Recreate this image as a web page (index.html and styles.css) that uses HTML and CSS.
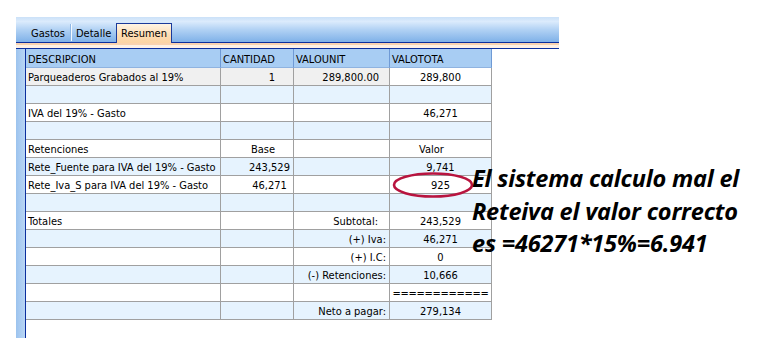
FILE: index.html
```html
<!DOCTYPE html>
<html lang="es">
<head>
    <meta charset="UTF-8">
    <title>Resumen</title>
    <link rel="stylesheet" href="styles.css">
</head>
<body>
    <div class="panel">
        <div class="tabbar">
            <span class="tab first">Gastos</span>
            <span class="sep"></span>
            <span class="tab">Detalle</span>
            <span class="tab active">Resumen</span>
        </div>
        <div class="band"></div>
        <div class="content">
            <div class="strip"></div>
            <div class="grid">
                <div class="row head">
                    <div class="cell">DESCRIPCION</div>
                    <div class="cell">CANTIDAD</div>
                    <div class="cell">VALOUNIT</div>
                    <div class="cell">VALOTOTA</div>
                </div>
                <div class="row">
                    <div class="cell ro">Parqueaderos Grabados al 19%</div>
                    <div class="cell ro right qty">1</div>
                    <div class="cell ro right unit">289,800.00</div>
                    <div class="cell center">289,800</div>
                </div>
                <div class="row alt">
                    <div class="cell"></div><div class="cell"></div><div class="cell"></div><div class="cell"></div>
                </div>
                <div class="row">
                    <div class="cell">IVA del 19% - Gasto</div>
                    <div class="cell"></div>
                    <div class="cell"></div>
                    <div class="cell center">46,271</div>
                </div>
                <div class="row alt">
                    <div class="cell"></div><div class="cell"></div><div class="cell"></div><div class="cell"></div>
                </div>
                <div class="row">
                    <div class="cell">Retenciones</div>
                    <div class="cell center base">Base</div>
                    <div class="cell"></div>
                    <div class="cell center valor">Valor</div>
                </div>
                <div class="row alt">
                    <div class="cell">Rete_Fuente para IVA del 19% - Gasto</div>
                    <div class="cell center amount">243,529</div>
                    <div class="cell"></div>
                    <div class="cell center">9,741</div>
                </div>
                <div class="row">
                    <div class="cell">Rete_Iva_S para IVA del 19% - Gasto</div>
                    <div class="cell center amount">46,271</div>
                    <div class="cell"></div>
                    <div class="cell center">925</div>
                </div>
                <div class="row alt">
                    <div class="cell"></div><div class="cell"></div><div class="cell"></div><div class="cell"></div>
                </div>
                <div class="row">
                    <div class="cell">Totales</div>
                    <div class="cell"></div>
                    <div class="cell right label sub">Subtotal:</div>
                    <div class="cell center">243,529</div>
                </div>
                <div class="row alt">
                    <div class="cell"></div>
                    <div class="cell"></div>
                    <div class="cell right label">(+) Iva:</div>
                    <div class="cell center">46,271</div>
                </div>
                <div class="row">
                    <div class="cell"></div>
                    <div class="cell"></div>
                    <div class="cell right label">(+) I.C:</div>
                    <div class="cell center">0</div>
                </div>
                <div class="row alt">
                    <div class="cell"></div>
                    <div class="cell"></div>
                    <div class="cell right label">(-) Retenciones:</div>
                    <div class="cell center">10,666</div>
                </div>
                <div class="row">
                    <div class="cell"></div>
                    <div class="cell"></div>
                    <div class="cell"></div>
                    <div class="cell center rule">============</div>
                </div>
                <div class="row alt">
                    <div class="cell"></div>
                    <div class="cell"></div>
                    <div class="cell right label">Neto a pagar:</div>
                    <div class="cell center">279,134</div>
                </div>
            </div>
        </div>
    </div>

    <!-- marca sobre el valor 925 -->
    <svg class="mark" width="84" height="28" viewBox="0 0 84 28">
        <ellipse cx="42" cy="14" rx="39" ry="11.5" fill="none" stroke="#b8143f" stroke-width="2.6"/>
    </svg>

    <p class="note">El sistema calculo mal el<br>Reteiva el valor correcto<br>es =46271*15%=6.941</p>
</body>
</html>
```

FILE: styles.css
```css
body {
    margin: 0;
    background: #fff;
    font-family: 'DejaVu Sans Condensed', 'DejaVu Sans', sans-serif;
    font-size: 11px;
    color: #000;
}

.panel {
    margin: 17px 0 0 16px;
    width: 543px;
    height: 321px;
    display: flex;
    flex-direction: column;
}

.tabbar {
    height: 25px;
    display: flex;
    align-items: flex-end;
    background: linear-gradient(#cbe1f8 0, #dbebfc 18%, #b2d2f4 50%, #7fb1e8 100%);
}

.tab {
    box-sizing: border-box;
    height: 19px;
    padding: 3px 4px 0 4px;
    line-height: 15px;
    white-space: nowrap;
}

.tab.first {
    width: 55px;
    padding-left: 15px;
}

.sep {
    width: 1px;
    height: 17px;
    margin-bottom: 1px;
    background: #f4f9fe;
    box-shadow: -1px 0 0 #8fb8e6;
}

.tab.active {
    position: relative;
    z-index: 1;
    width: 56px;
    height: 20px;
    margin-left: 1px;
    margin-bottom: -1px;
    padding-top: 2px;
    border: 1px solid #1b3a9a;
    border-bottom: none;
    background: linear-gradient(#fff4e4, #fddcb2 60%, #fbd4a4);
}

.tab:nth-child(3) {
    width: 43px;
}

.band {
    height: 5px;
    border-top: 1px solid #0b2f9e;
    border-bottom: 1px solid #0b2f9e;
    background: linear-gradient(#f9d3b0 0, #f9d3b0 40%, #fdf1e6 40%);
}

.content {
    flex: 1;
    display: flex;
}

.strip {
    width: 9px;
    border-right: 1px solid #0b2f9e;
    background: linear-gradient(90deg, #9cc3ee, #b9d6f5);
}

.row {
    display: grid;
    grid-template-columns: 195px 73px 96px 102px;
}

.cell {
    box-sizing: border-box;
    height: 18px;
    padding: 3px 2px 0 2px;
    line-height: 14px;
    white-space: nowrap;
    overflow: hidden;
    border-right: 1px solid #a0a0a0;
    border-bottom: 1px solid #a0a0a0;
}

.row.alt .cell {
    background: #e6f3fe;
}

.row.head .cell {
    height: 19px;
    line-height: 15px;
    background: #a8cdf3;
    border-right-color: #6f9ad5;
    border-bottom-color: #8fb3e0;
}

.cell.ro {
    background: #f0f0f0;
}

.right { text-align: right; }
.center { text-align: center; }

.qty { padding-right: 18px; }
.unit { padding-right: 10px; }
.label { padding-right: 3px; }
.label.sub { padding-right: 11px; }
.base { padding-left: 14px; }
.amount { padding-left: 27px; }
.valor { padding-right: 20px; }

.rule {
    padding: 3px 0 0 0;
    letter-spacing: -0.3px;
}

.mark {
    position: absolute;
    left: 391px;
    top: 171px;
}

.note {
    position: absolute;
    left: 472px;
    top: 162px;
    margin: 0;
    font-family: 'Open Sans', Lato, sans-serif;
    font-weight: 700;
    font-style: italic;
    font-size: 23.5px;
    line-height: 32.5px;
    letter-spacing: -0.2px;
    white-space: nowrap;
}
```
